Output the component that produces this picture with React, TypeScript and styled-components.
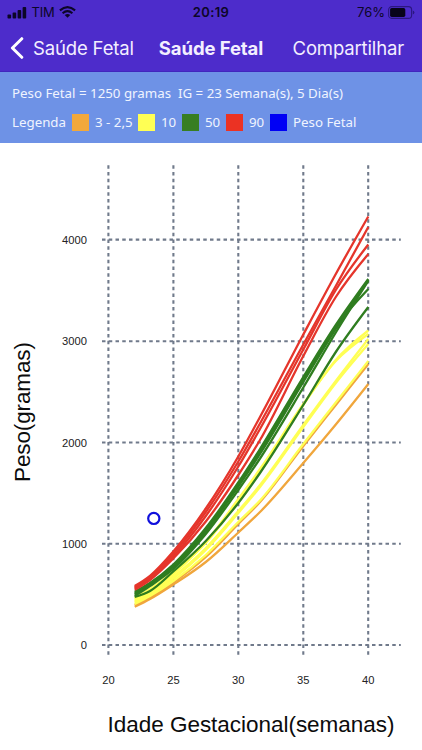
import React from "react";
import styled, { createGlobalStyle } from "styled-components";

const GlobalStyle = createGlobalStyle`
  body { margin: 0; background: #fff; }
  * { box-sizing: border-box; }
`;

const Screen = styled.div`
  width: 422px;
  height: 750px;
  display: flex;
  flex-direction: column;
  overflow: hidden;
  background: #fff;
  font-family: Inter, sans-serif;
`;

const Header = styled.header`
  flex: none;
  height: 72px;
  background: #4d2ccb;
  border-bottom: 1px solid #4126bd;
`;

const StatusBar = styled.div`
  height: 24px;
  display: grid;
  grid-template-columns: 1fr auto 1fr;
  align-items: center;
  padding: 0 7px;
  color: #0c0628;
  font-size: 13px;
  line-height: 24px;
`;

const StatusGroup = styled.div<{ $end?: boolean }>`
  display: flex;
  align-items: center;
  gap: ${(p) => (p.$end ? 3 : 4.5)}px;
  justify-content: ${(p) => (p.$end ? "flex-end" : "flex-start")};
`;

const StatusText = styled.span<{ $spacing?: number }>`
  letter-spacing: ${(p) => p.$spacing ?? 0}px;
`;

const Clock = styled.span`
  font-weight: 600;
  letter-spacing: 0.35px;
`;

const NavBar = styled.nav`
  height: 47px;
  display: flex;
  align-items: center;
  color: #f3efff;
  padding: 0 18px 0 10px;
`;

const BackButton = styled.div`
  display: flex;
  align-items: center;
  gap: 9px;
`;

const NavText = styled.span<{ $bold?: boolean; $spacing: number }>`
  font-size: 18.5px;
  line-height: 24px;
  font-weight: ${(p) => (p.$bold ? 650 : 400)};
  letter-spacing: ${(p) => p.$spacing}px;
  white-space: nowrap;
`;

const NavTitle = styled(NavText)`
  margin: 0 auto 0 25px;
`;

const InfoPanel = styled.section`
  flex: none;
  height: 71px;
  background: #6e92e6;
  color: #f0f4ff;
  padding: 11px 12px 0;
  font-family: "Noto Sans", sans-serif;
  font-size: 13.3px;
`;

const Summary = styled.div`
  height: 20px;
  line-height: 20px;
  white-space: pre;
`;

const Legend = styled.div`
  display: flex;
  align-items: center;
  height: 20px;
  margin-top: 9px;
`;

const LegendItem = styled.div<{ $width: number }>`
  display: flex;
  align-items: center;
  gap: 6px;
  width: ${(p) => p.$width}px;
  white-space: nowrap;
`;

const LegendTitle = styled.span`
  width: 60px;
`;

const Swatch = styled.span<{ $color: string }>`
  width: 17px;
  height: 17px;
  background: ${(p) => p.$color};
`;

const ChartArea = styled.main`
  flex: 1;
  min-height: 0;
`;

const Chart = styled.svg`
  display: block;
  font-family: "Liberation Sans", Arial, sans-serif;
`;

const LEGEND = [
  { label: "3 - 2,5", color: "#f2a83b", width: 66 },
  { label: "10", color: "#ffff54", width: 44 },
  { label: "50", color: "#377e22", width: 44 },
  { label: "90", color: "#eb3223", width: 44 },
  { label: "Peso Fetal", color: "#0000f5", width: 90 },
];

const KNOTS = [134.7, 150, 173.3, 205.8, 238.3, 260, 303.3, 335.8, 368.3];

const SERIES: { color: string; curves: number[][] }[] = [
  {
    color: "#f0a63c",
    curves: [
      [606.8, 599, 584.5, 562, 532.5, 512, 463, 424.5, 384],
      [605, 597.5, 582.5, 557, 524, 502, 446, 405, 364],
    ],
  },
  {
    color: "#ffff54",
    curves: [
      [604, 596, 581, 555, 522, 500.5, 444, 402.5, 361],
      [602.5, 594, 578.5, 550, 513, 487, 427, 383, 344],
      [601, 592, 576.5, 548, 511, 485, 425, 381, 339],
      [599.5, 590, 574, 542, 499, 469, 404, 361, 334],
      [598, 589, 572, 543, 501, 471, 405, 360, 330.5],
    ],
  },
  {
    color: "#2f7d20",
    curves: [
      [597, 591, 571.5, 541, 503, 473, 405, 352, 307],
      [596, 586, 569, 534, 490, 458.5, 387.5, 332.5, 281],
      [594.5, 584.5, 567, 531.5, 486.5, 454, 382, 329, 280],
      [593, 583.5, 566, 530, 484.5, 451.5, 380, 327, 289],
      [591.7, 583, 564.5, 528, 482.5, 449, 377, 325, 279],
    ],
  },
  {
    color: "#e5352b",
    curves: [
      [589.8, 580, 558.5, 521.5, 475, 440, 356, 297, 254],
      [588.5, 578.5, 556.5, 516, 466.5, 429, 349.5, 290, 244.5],
      [587.3, 577, 554, 512, 461.5, 423.5, 344.5, 286, 227],
      [586, 575.8, 551.5, 508.5, 456.5, 417, 334.5, 274, 216.5],
    ],
  },
];

const X_TICKS = [
  { value: 20, x: 108.4 },
  { value: 25, x: 173.4 },
  { value: 30, x: 238.3 },
  { value: 35, x: 303.3 },
  { value: 40, x: 368.2 },
];

const Y_TICKS = [
  { value: 4000, y: 239.6 },
  { value: 3000, y: 341.2 },
  { value: 2000, y: 442.5 },
  { value: 1000, y: 543.7 },
  { value: 0, y: 645 },
];

// Cubic Hermite interpolation with three-point slopes for uneven knots.
function curvePath(ys: number[]) {
  const last = ys.length - 1;
  const gap = (i: number) => KNOTS[i + 1] - KNOTS[i];
  const chord = (i: number) => (ys[i + 1] - ys[i]) / gap(i);
  const slope = (i: number): number => {
    if (i === 0) return (3 * chord(0) - slope(1)) / 2;
    if (i === last) return (3 * chord(last - 1) - slope(last - 1)) / 2;
    return (chord(i - 1) * gap(i) + chord(i) * gap(i - 1)) / (gap(i - 1) + gap(i));
  };
  let d = `M${KNOTS[0]} ${ys[0]}`;
  for (let i = 0; i < last; i++) {
    const h = gap(i) / 3;
    d += `C${KNOTS[i] + h} ${ys[i] + slope(i) * h} ${KNOTS[i + 1] - h} ${ys[i + 1] - slope(i + 1) * h} ${KNOTS[i + 1]} ${ys[i + 1]}`;
  }
  return d;
}

function SignalIcon() {
  return (
    <svg width="20" height="13" viewBox="0 0 20 13" fill="#0c0628">
      <rect x="0.5" y="8.5" width="3.6" height="4" rx="0.9" />
      <rect x="5.6" y="6.5" width="3.6" height="6" rx="0.9" />
      <rect x="10.6" y="4" width="3.6" height="8.5" rx="0.9" />
      <rect x="15.6" y="1" width="3.6" height="11.5" rx="0.9" />
    </svg>
  );
}

function WifiIcon() {
  return (
    <svg width="17" height="12" viewBox="0 0 17 12" fill="none" stroke="#0c0628" strokeWidth="2.1">
      <path d="M0.9 4.4Q8.5 -2.2 16.1 4.4" />
      <path d="M3.6 7.3Q8.5 3.1 13.4 7.3" />
      <path d="M8.5 11.8L5.7 9Q8.5 6.8 11.3 9Z" fill="#0c0628" stroke="none" />
    </svg>
  );
}

function BatteryIcon() {
  return (
    <svg width="27" height="13" viewBox="0 0 27 13">
      <rect x="0.6" y="0.6" width="23" height="11.8" rx="3.2" fill="none" stroke="#2b1780" strokeWidth="1.1" />
      <rect x="2.1" y="2.1" width="15.2" height="8.8" rx="1.6" fill="#080419" />
      <path d="M24.8 4.4Q26.4 5 26.4 6.5T24.8 8.6Z" fill="#2b1780" />
    </svg>
  );
}

function GrowthChart() {
  return (
    <Chart width="422" height="607" viewBox="0 143 422 607">
      <g stroke="#707a8b" strokeWidth="2.1" strokeDasharray="3.5 3.25">
        {X_TICKS.map((t) => (
          <line key={t.value} x1={t.x} x2={t.x} y1="165.3" y2="658" />
        ))}
        {Y_TICKS.map((t) => (
          <line key={t.value} y1={t.y} y2={t.y} x1="102" x2="400.8" />
        ))}
      </g>
      {SERIES.map((s) => (
        <g key={s.color} fill="none" stroke={s.color} strokeWidth="2.3">
          {s.curves.map((ys, i) => (
            <path key={i} d={curvePath(ys)} />
          ))}
        </g>
      ))}
      <circle cx="153.8" cy="518.4" r="5.6" fill="#fff" stroke="#1010dc" strokeWidth="2.2" />
      <g fill="#222" fontSize="11.2">
        {Y_TICKS.map((t) => (
          <text key={t.value} x="87" y={t.y + 4} textAnchor="end">{t.value}</text>
        ))}
        {X_TICKS.map((t) => (
          <text key={t.value} x={t.x} y="684" textAnchor="middle">{t.value}</text>
        ))}
      </g>
      <g fill="#0c0c0c" fontSize="22.5">
        <text x="107.5" y="731.8" textLength="287">Idade Gestacional(semanas)</text>
        <text transform="translate(29.6 482) rotate(-90)" textLength="140">Peso(gramas)</text>
      </g>
    </Chart>
  );
}

export default function App() {
  return (
    <Screen>
      <GlobalStyle />
      <Header>
        <StatusBar>
          <StatusGroup>
            <SignalIcon />
            <StatusText $spacing={-0.2}>TIM</StatusText>
            <WifiIcon />
          </StatusGroup>
          <Clock>20:19</Clock>
          <StatusGroup $end>
            <StatusText>76%</StatusText>
            <BatteryIcon />
          </StatusGroup>
        </StatusBar>
        <NavBar>
          <BackButton>
            <svg width="14" height="22" viewBox="0 0 14 22" fill="none" stroke="#fff" strokeWidth="3" strokeLinecap="round" strokeLinejoin="round">
              <path d="M11.8 1.7L2.4 11L11.8 20.3" />
            </svg>
            <NavText $spacing={-0.15}>Saúde Fetal</NavText>
          </BackButton>
          <NavTitle $bold $spacing={-0.1}>Saúde Fetal</NavTitle>
          <NavText $spacing={-0.15}>Compartilhar</NavText>
        </NavBar>
      </Header>
      <InfoPanel>
        <Summary>{"Peso Fetal = 1250 gramas  IG = 23 Semana(s), 5 Dia(s)"}</Summary>
        <Legend>
          <LegendTitle>Legenda</LegendTitle>
          {LEGEND.map((item) => (
            <LegendItem key={item.label} $width={item.width}>
              <Swatch $color={item.color} />
              {item.label}
            </LegendItem>
          ))}
        </Legend>
      </InfoPanel>
      <ChartArea>
        <GrowthChart />
      </ChartArea>
    </Screen>
  );
}
